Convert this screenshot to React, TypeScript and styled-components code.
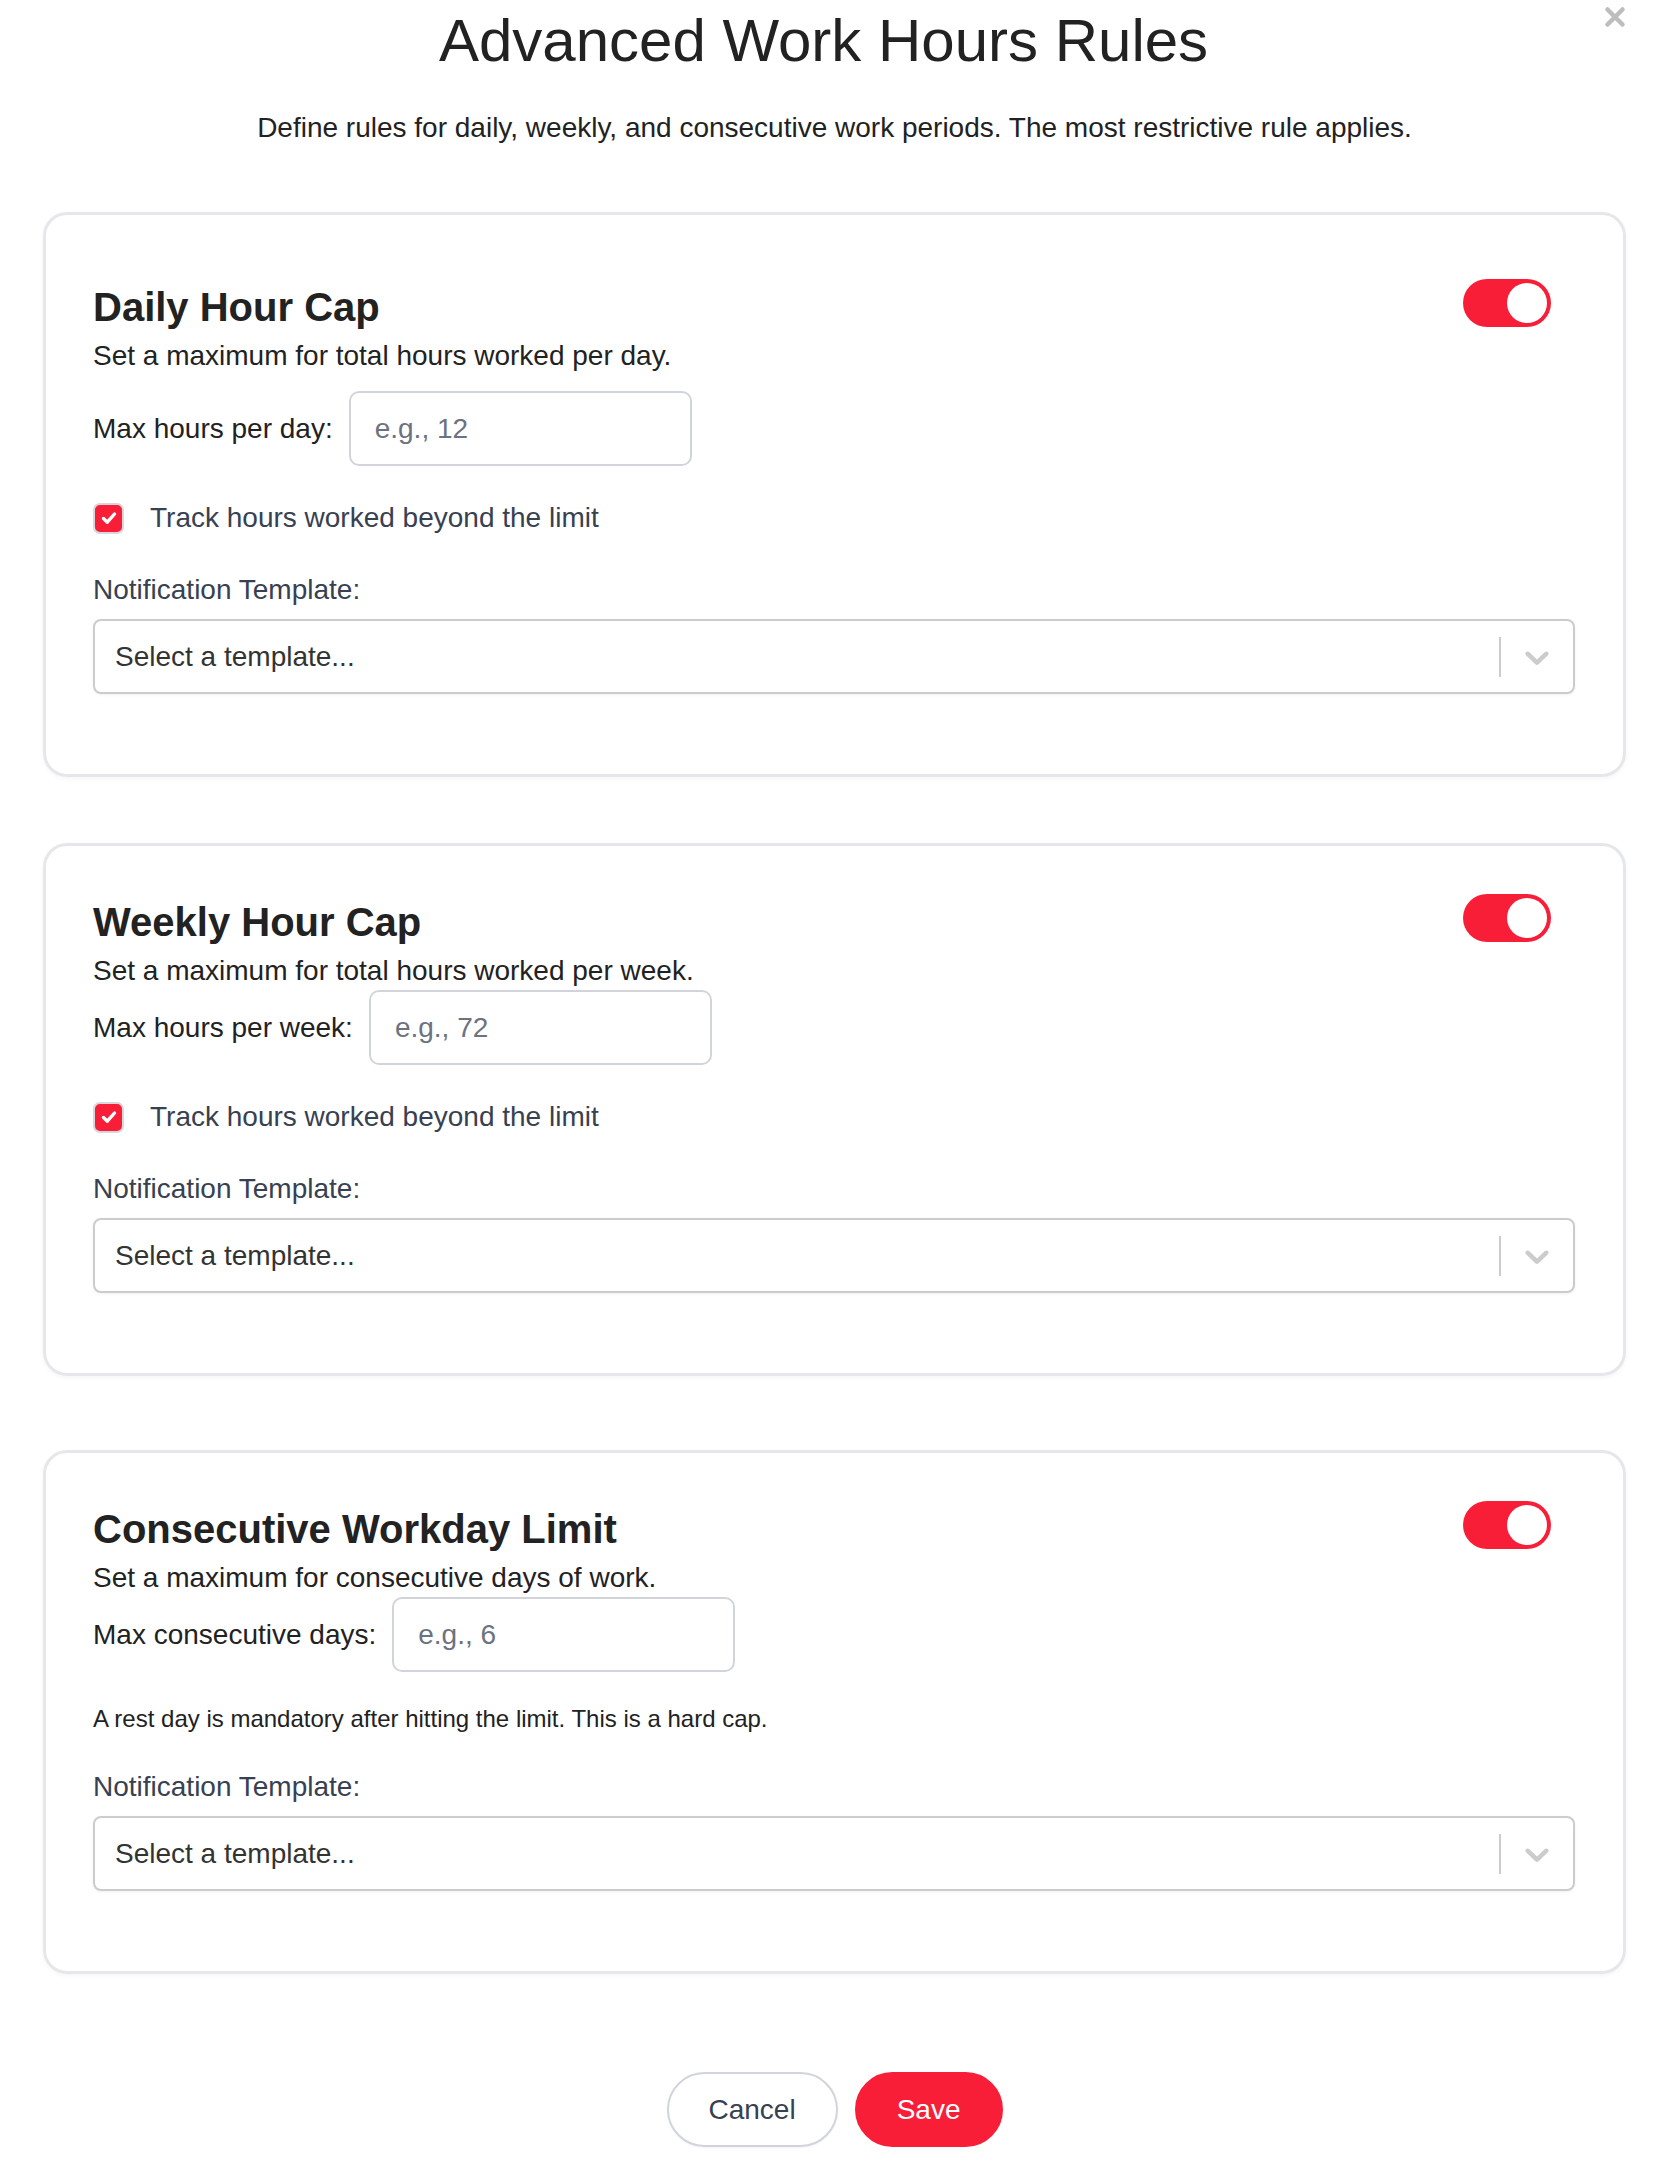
import { createGlobalStyle } from "styled-components";
import styled from "styled-components";

const RED = "#f91e38";

const GlobalStyle = createGlobalStyle`
  html, body {
    margin: 0;
    padding: 0;
    background: #ffffff;
  }
  body {
    font-family: "Liberation Sans", Arial, Helvetica, sans-serif;
    color: #222222;
  }
  * {
    box-sizing: border-box;
  }
`;

const Page = styled.div`
  padding: 0 47px 30px 43px;
`;

const Header = styled.header`
  display: flex;
  align-items: flex-start;
  padding-top: 6px;
`;

const Title = styled.h1`
  flex: 1;
  margin: 0;
  text-align: center;
  font-size: 60px;
  line-height: 69px;
  font-weight: 400;
  color: #222222;
`;

const CloseButton = styled.button`
  border: none;
  background: none;
  padding: 0;
  margin-top: 0;
  width: 22px;
  height: 22px;
  cursor: pointer;
  display: flex;
`;

const Subtitle = styled.p`
  margin: 37px 0 0;
  text-align: center;
  font-size: 28px;
  line-height: 32px;
  color: #222222;
`;

const Cards = styled.div`
  margin-top: 68px;
  display: flex;
  flex-direction: column;
`;

const Card = styled.section<{ $spacious?: boolean; $after?: number }>`
  border: 3px solid #e5e7eb;
  border-radius: 24px;
  box-shadow: 0 2px 4px rgba(0, 0, 0, 0.04);
  padding: ${(p) => (p.$spacious ? 69 : 53)}px 48px 80px 47px;
  margin-bottom: ${(p) => p.$after ?? 0}px;
`;

const CardHeader = styled.div`
  display: flex;
  align-items: flex-start;
  justify-content: space-between;
  padding-right: 24px;
`;

const CardTitle = styled.h2`
  margin: 0;
  font-size: 40px;
  line-height: 46px;
  font-weight: 700;
  color: #222222;
`;

const Toggle = styled.button<{ $on: boolean }>`
  position: relative;
  width: 88px;
  height: 48px;
  margin-top: -5px;
  border: none;
  border-radius: 24px;
  padding: 0;
  cursor: pointer;
  background: ${(p) => (p.$on ? RED : "#d1d5db")};
  &::after {
    content: "";
    position: absolute;
    top: 4px;
    left: ${(p) => (p.$on ? 44 : 4)}px;
    width: 40px;
    height: 40px;
    border-radius: 50%;
    background: #ffffff;
  }
`;

const Description = styled.p`
  margin: 10px 0 0;
  font-size: 28px;
  line-height: 32px;
  color: #222222;
`;

const InputRow = styled.div<{ $spacious?: boolean }>`
  display: flex;
  align-items: center;
  gap: 16px;
  margin-top: ${(p) => (p.$spacious ? 19 : 3)}px;
`;

const FieldLabel = styled.label`
  font-size: 28px;
  line-height: 32px;
  color: #222222;
`;

const NumberInput = styled.input`
  width: 343px;
  height: 75px;
  border: 2px solid #d1d5db;
  border-radius: 10px;
  padding: 0 24px;
  font-family: "Liberation Sans", Arial, sans-serif;
  font-size: 28px;
  color: #222222;
  outline: none;
  &::placeholder {
    color: #6b7280;
  }
`;

const CheckRow = styled.label`
  display: flex;
  align-items: center;
  gap: 26px;
  margin-top: 36px;
  height: 32px;
  font-size: 28px;
  color: #374151;
  cursor: pointer;
`;

const CheckBox = styled.span<{ $checked: boolean }>`
  width: 31px;
  height: 31px;
  border: 2px solid #d6d7dc;
  border-radius: 7px;
  background: ${(p) => (p.$checked ? RED : "#ffffff")};
  display: flex;
  align-items: center;
  justify-content: center;
`;

const Note = styled.p`
  margin: 33px 0 0;
  font-size: 24px;
  line-height: 28px;
  color: #222222;
`;

const TemplateLabel = styled.div<{ $tight?: boolean }>`
  margin-top: ${(p) => (p.$tight ? 38 : 40)}px;
  font-size: 28px;
  line-height: 32px;
  color: #374151;
`;

const Select = styled.div`
  margin-top: 13px;
  height: 75px;
  border: 2px solid #cccccc;
  border-radius: 8px;
  box-shadow: 0 1px 3px rgba(0, 0, 0, 0.06);
  display: flex;
  align-items: center;
  background: #ffffff;
`;

const SelectValue = styled.div`
  flex: 1;
  padding: 0 20px;
  font-size: 28px;
  color: #333333;
`;

const Separator = styled.span`
  width: 2px;
  height: 40px;
  background: #cccccc;
`;

const Indicator = styled.div`
  padding: 0 16px;
  display: flex;
  align-items: center;
`;

const Actions = styled.div`
  margin-top: 98px;
  display: flex;
  justify-content: center;
  gap: 17px;
`;

const Button = styled.button<{ $primary?: boolean }>`
  height: 75px;
  padding: 0 40px;
  border-radius: 38px;
  border: 2px solid ${(p) => (p.$primary ? RED : "#d1d5db")};
  background: ${(p) => (p.$primary ? RED : "#ffffff")};
  color: ${(p) => (p.$primary ? "#ffffff" : "#374151")};
  font-family: "Liberation Sans", Arial, sans-serif;
  font-size: 28px;
  font-weight: 500;
  cursor: pointer;
  box-shadow: ${(p) => (p.$primary ? "none" : "0 1px 2px rgba(0,0,0,0.05)")};
`;

function Chevron() {
  return (
    <svg width="40" height="40" viewBox="0 0 20 20" fill="#cccccc">
      <path d="M4.516 7.548c0.436-0.446 1.043-0.481 1.576 0l3.908 3.747 3.908-3.747c0.533-0.481 1.141-0.446 1.574 0 0.436 0.445 0.408 1.197 0 1.615-0.406 0.418-4.695 4.502-4.695 4.502-0.217 0.223-0.502 0.335-0.787 0.335s-0.57-0.112-0.789-0.335c0 0-4.287-4.084-4.695-4.502s-0.436-1.17 0-1.615z" />
    </svg>
  );
}

function TemplateSelect({ tight }: { tight?: boolean }) {
  return (
    <>
      <TemplateLabel $tight={tight}>Notification Template:</TemplateLabel>
      <Select>
        <SelectValue>Select a template...</SelectValue>
        <Separator />
        <Indicator>
          <Chevron />
        </Indicator>
      </Select>
    </>
  );
}

function TrackCheck() {
  return (
    <CheckRow>
      <CheckBox $checked>
        <svg width="20" height="20" viewBox="0 0 20 20">
          <polyline
            points="4.5,10.5 8.3,14.2 15.5,6"
            fill="none"
            stroke="#ffffff"
            strokeWidth="3.4"
            strokeLinecap="round"
            strokeLinejoin="round"
          />
        </svg>
      </CheckBox>
      Track hours worked beyond the limit
    </CheckRow>
  );
}

interface Rule {
  id: string;
  title: string;
  description: string;
  label: string;
  placeholder: string;
  track: boolean;
  note?: string;
}

const rules: Rule[] = [
  {
    id: "daily",
    title: "Daily Hour Cap",
    description: "Set a maximum for total hours worked per day.",
    label: "Max hours per day:",
    placeholder: "e.g., 12",
    track: true,
  },
  {
    id: "weekly",
    title: "Weekly Hour Cap",
    description: "Set a maximum for total hours worked per week.",
    label: "Max hours per week:",
    placeholder: "e.g., 72",
    track: true,
  },
  {
    id: "consecutive",
    title: "Consecutive Workday Limit",
    description: "Set a maximum for consecutive days of work.",
    label: "Max consecutive days:",
    placeholder: "e.g., 6",
    track: false,
    note: "A rest day is mandatory after hitting the limit. This is a hard cap.",
  },
];

const gapsAfter = [66, 74, 0];

export default function App() {
  return (
    <>
      <GlobalStyle />
      <Page>
        <Header>
          <Title>Advanced Work Hours Rules</Title>
          <CloseButton aria-label="Close">
            <svg width="22" height="22" viewBox="0 0 22 22">
              <path
                d="M3.5 3.5 L18.5 18.5 M18.5 3.5 L3.5 18.5"
                stroke="#bdbdbd"
                strokeWidth="4.5"
                strokeLinecap="round"
              />
            </svg>
          </CloseButton>
        </Header>
        <Subtitle>
          Define rules for daily, weekly, and consecutive work periods. The most restrictive rule
          applies.
        </Subtitle>
        <Cards>
          {rules.map((rule, i) => (
            <Card key={rule.id} $spacious={i === 0} $after={gapsAfter[i]}>
              <CardHeader>
                <CardTitle>{rule.title}</CardTitle>
                <Toggle $on aria-label={`Toggle ${rule.title}`} />
              </CardHeader>
              <Description>{rule.description}</Description>
              <InputRow $spacious={i === 0}>
                <FieldLabel htmlFor={rule.id}>{rule.label}</FieldLabel>
                <NumberInput id={rule.id} placeholder={rule.placeholder} />
              </InputRow>
              {rule.track && <TrackCheck />}
              {rule.note && <Note>{rule.note}</Note>}
              <TemplateSelect tight={!!rule.note} />
            </Card>
          ))}
        </Cards>
        <Actions>
          <Button>Cancel</Button>
          <Button $primary>Save</Button>
        </Actions>
      </Page>
    </>
  );
}
